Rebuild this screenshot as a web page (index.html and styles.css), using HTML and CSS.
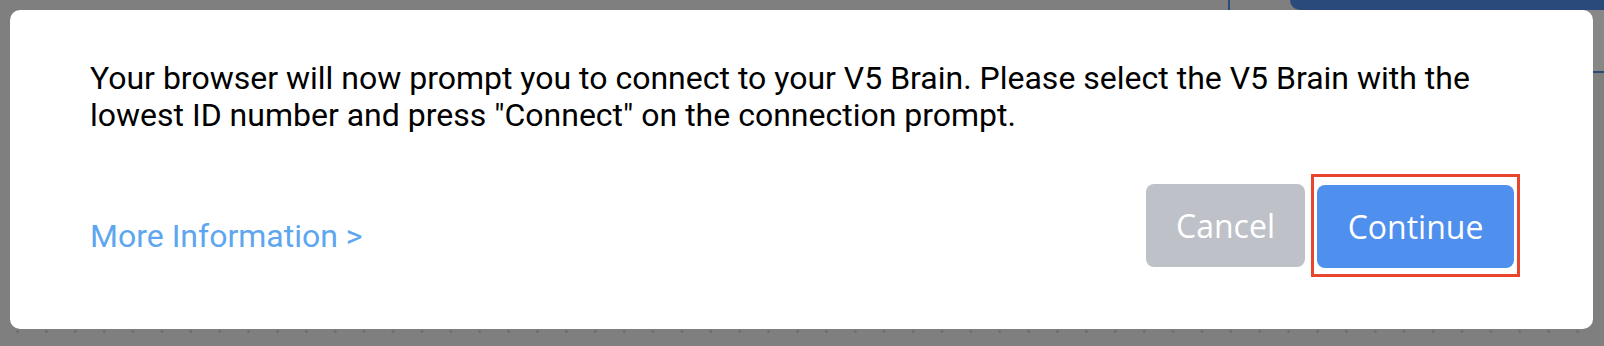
FILE: index.html
```html
<!DOCTYPE html>
<html lang="en">
<head>
    <meta charset="UTF-8">
    <meta name="viewport" content="width=device-width, initial-scale=1.0">
    <title>Connect to V5 Brain</title>
    <link rel="stylesheet" href="styles.css">
</head>
<body>
    <!-- dimmed app underneath the dialog -->
    <div class="app-bg">
        <div class="app-divider"></div>
        <div class="app-tab"></div>
        <div class="app-panel"></div>
    </div>

    <div class="overlay">
        <div class="modal">
            <p class="message">Your browser will now prompt you to connect to your V5 Brain. Please select the V5 Brain with the lowest ID number and press "Connect" on the connection prompt.</p>
            <div class="modal-footer">
                <a class="more-info" href="#">More Information &gt;</a>
                <div class="actions">
                    <button class="btn btn-cancel">Cancel</button>
                    <span class="highlight">
                        <button class="btn btn-continue">Continue</button>
                    </span>
                </div>
            </div>
        </div>
    </div>
</body>
</html>
```

FILE: styles.css
```css
html, body {
    margin: 0;
    height: 100%;
}
body {
    position: relative;
    overflow: hidden;
    background-color: #7f7f7f;
    background-image: radial-gradient(circle, #6c6c6c 1px, transparent 1.6px);
    background-size: 28.9px 29px;
    background-position: 3px -2px;
    font-family: Roboto, "Liberation Sans", sans-serif;
}
.app-bg {
    position: absolute;
    inset: 0;
}
.app-divider {
    position: absolute;
    left: 1228px;
    top: 0;
    width: 2px;
    height: 12px;
    background: #2a4a7c;
}
.app-tab {
    position: absolute;
    left: 1290px;
    top: 0;
    right: 0;
    height: 10px;
    background: #2a4a7c;
    border-bottom-left-radius: 10px;
}
.app-panel {
    position: absolute;
    left: 1580px;
    top: 10px;
    right: 0;
    height: 61px;
    background: #878787;
    border-bottom: 2px solid #2a4a7c;
}
.overlay {
    position: relative;
    padding: 10px 11px 17px 10px;
}
.modal {
    background: white;
    border-radius: 10px;
    padding: 50px 73px 0 80px;
    height: 319px;
    box-sizing: border-box;
}
.message {
    margin: 0;
    font-size: 32px;
    line-height: 37px;
    color: #000;
}
.modal-footer {
    display: flex;
    justify-content: space-between;
    align-items: center;
    margin-top: 40px;
}
.more-info {
    color: #5ea6f0;
    text-decoration: none;
    font-size: 32px;
    margin-top: 20px;
}
.actions {
    display: flex;
    align-items: center;
    gap: 6px;
}
.btn {
    font-family: "Open Sans", "Liberation Sans", sans-serif;
    font-size: 32px;
    color: white;
    border: none;
    border-radius: 8px;
    height: 83px;
    cursor: pointer;
}
.btn-cancel {
    background: #bec2c8;
    width: 159px;
}
.btn-continue {
    background: #4f8fed;
    width: 197px;
    display: block;
}
.highlight {
    display: block;
    border: 3px solid #e8452c;
    padding: 8px 3px 6px 3px;
}
```
